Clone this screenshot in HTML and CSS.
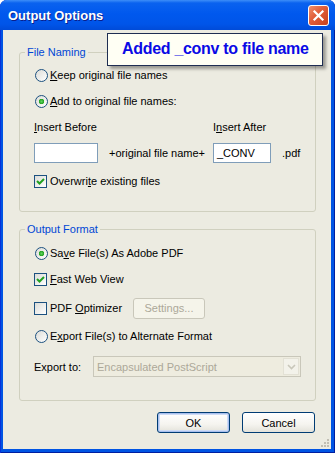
FILE: index.html
```html
<!DOCTYPE html>
<html lang="en">
<head>
  <meta charset="UTF-8">
  <title>Output Options</title>
  <link rel="stylesheet" href="styles.css">
</head>
<body>
  <div class="window">
    <div class="titlebar">
      <span class="title">Output Options</span>
      <span class="close">
        <svg width="19" height="19" viewBox="0 0 19 19"><path d="M5.5 5.5 L13.5 13.5 M13.5 5.5 L5.5 13.5" stroke="#fff" stroke-width="2.2" stroke-linecap="square"/></svg>
      </span>
    </div>
    <div class="client">
      <div class="group naming">
        <span class="legend">File Naming</span>
        <div class="row"><span class="radio"></span><span><u>K</u>eep original file names</span></div>
        <div class="row"><span class="radio on"></span><span><u>A</u>dd to original file names:</span></div>
        <div class="labels">
          <span class="before"><u>I</u>nsert Before</span>
          <span>I<u>n</u>sert After</span>
        </div>
        <div class="fields">
          <span class="field wide"></span>
          <span class="joiner">+original file name+</span>
          <span class="field narrow">_CONV</span>
          <span class="ext">.pdf</span>
        </div>
        <div class="row overwrite"><span class="check"><svg width="11" height="11" viewBox="0 0 11 11"><path d="M2 5 L4.5 7.5 L9 3" fill="none" stroke="#21a121" stroke-width="2"/></svg></span><span>Overwri<u>t</u>e existing files</span></div>
      </div>

      <div class="group format">
        <span class="legend">Output Format</span>
        <div class="row"><span class="radio on"></span><span>Sa<u>v</u>e File(s) As Adobe PDF</span></div>
        <div class="row"><span class="check"><svg width="11" height="11" viewBox="0 0 11 11"><path d="M2 5 L4.5 7.5 L9 3" fill="none" stroke="#21a121" stroke-width="2"/></svg></span><span><u>F</u>ast Web View</span></div>
        <div class="row tall">
          <span class="opt"><span class="check"></span><span>PDF <u>O</u>ptimizer</span></span>
          <span class="btn disabled">Settings...</span>
        </div>
        <div class="row short"><span class="radio"></span><span>E<u>x</u>port File(s) to Alternate Format</span></div>
        <div class="export">
          <span class="export-label">Export to:</span>
          <span class="combo">
            <span class="combo-text">Encapsulated PostScript</span>
            <span class="combo-btn"><svg width="9" height="6" viewBox="0 0 9 6"><path d="M1 1 L4.5 4.5 L8 1" fill="none" stroke="#c9c7ba" stroke-width="1.6"/></svg></span>
          </span>
        </div>
      </div>

      <div class="actions">
        <span class="btn push default">OK</span>
        <span class="btn push">Cancel</span>
      </div>
      <svg class="grip" width="9" height="9" viewBox="0 0 9 9">
        <rect x="6" y="0" width="2" height="2" fill="#c1beb3"/>
        <rect x="3" y="3" width="2" height="2" fill="#c1beb3"/>
        <rect x="6" y="3" width="2" height="2" fill="#c1beb3"/>
        <rect x="0" y="6" width="2" height="2" fill="#c1beb3"/>
        <rect x="3" y="6" width="2" height="2" fill="#c1beb3"/>
        <rect x="6" y="6" width="2" height="2" fill="#c1beb3"/>
      </svg>
    </div>
    <div class="callout">Added _conv to file name</div>
  </div>
</body>
</html>
```

FILE: styles.css
```css
:root {
  --face: #ecebe1;
  --group-line: #d0d0bf;
  --xp-blue: #0054e3;
  --ctl-border: #1c5180;
  --disabled-text: #aca899;
  --disabled-line: #c9c7ba;
}
body {
  margin: 0;
  background: #fff;
  font-family: "Liberation Sans", Arial, sans-serif;
  font-size: 11px;
  color: #000;
}
.window {
  position: relative;
  width: 335px;
  height: 453px;
  display: flex;
  flex-direction: column;
  box-sizing: border-box;
  background: var(--xp-blue);
  border-radius: 7px 7px 0 0;
  box-shadow: inset 1px 0 #0831d9, inset -1px 0 #001ea0, inset 0 -1px #001ea0;
  overflow: hidden;
}
.titlebar {
  height: 30px;
  flex: none;
  display: flex;
  align-items: center;
  justify-content: space-between;
  padding: 0 6px 0 8px;
  background: linear-gradient(180deg, #3d8ef8 0, #0a62ef 3px, #0058ee 14px, #0055e9 24px, #004bd8 30px);
}
.title {
  color: #fff;
  font-weight: bold;
  font-size: 13px;
  text-shadow: 1px 1px #0a1e8c;
}
.close {
  width: 21px;
  height: 21px;
  box-sizing: border-box;
  border: 1px solid #fff;
  border-radius: 3px;
  background: linear-gradient(135deg, #f0906c 0, #e2603c 40%, #c8401c 100%);
  display: flex;
  align-items: center;
  justify-content: center;
}
.client {
  position: relative;
  flex: 1;
  margin: 0 4px 4px 3px;
  padding: 0 15px 0 16px;
  background: var(--face);
  display: flex;
  flex-direction: column;
}
.group {
  position: relative;
  box-sizing: border-box;
  border: 1px solid var(--group-line);
  border-radius: 3px;
  padding-left: 14px;
}
.naming {
  margin-top: 22px;
  height: 160px;
  padding-top: 9px;
}
.format {
  margin-top: 17px;
  height: 172px;
  padding-top: 10px;
}
.legend {
  position: absolute;
  top: -7px;
  left: 5px;
  padding: 0 2px;
  line-height: 13px;
  color: #0046d5;
  background: var(--face);
}
.row {
  display: flex;
  align-items: center;
  height: 26px;
}
.row.tall {
  height: 32px;
}
.row.short {
  height: 24px;
}
.radio {
  flex: none;
  width: 13px;
  height: 13px;
  box-sizing: border-box;
  margin: 0 2px 0 1px;
  border: 1px solid var(--ctl-border);
  border-radius: 50%;
  background: linear-gradient(135deg, #dcdcd7, #fff);
}
.radio.on {
  background: radial-gradient(circle, #5fd35f 0, #21a121 2.5px, transparent 3px), linear-gradient(135deg, #dcdcd7, #fff);
}
.check {
  flex: none;
  width: 13px;
  height: 13px;
  box-sizing: border-box;
  margin-right: 3px;
  border: 1px solid var(--ctl-border);
  background: linear-gradient(135deg, #dcdcd7, #fff);
  display: flex;
}
.labels {
  display: flex;
  align-items: center;
  height: 26px;
}
.before {
  width: 179px;
}
.fields {
  display: flex;
  align-items: center;
  height: 20px;
  margin-top: 3px;
}
.field {
  height: 20px;
  box-sizing: border-box;
  border: 1px solid #7f9db9;
  background: #fff;
  padding: 0 3px;
  line-height: 18px;
}
.field.wide {
  width: 64px;
}
.field.narrow {
  width: 58px;
}
.joiner {
  width: 115px;
  box-sizing: border-box;
  padding-left: 11px;
}
.ext {
  margin-left: 11px;
}
.row.overwrite {
  height: 20px;
  margin-top: 8px;
}
.opt {
  display: flex;
  align-items: center;
  width: 99px;
}
.btn {
  display: flex;
  align-items: center;
  justify-content: center;
  box-sizing: border-box;
  border-radius: 3px;
}
.btn.disabled {
  width: 72px;
  height: 21px;
  border: 1px solid var(--disabled-line);
  background: #f5f4ea;
  color: var(--disabled-text);
}
.export {
  display: flex;
  align-items: center;
  height: 21px;
  margin-top: 8px;
}
.export-label {
  width: 59px;
}
.combo {
  width: 208px;
  height: 21px;
  box-sizing: border-box;
  border: 1px solid var(--disabled-line);
  background: #eeecdf;
  display: flex;
  align-items: center;
  justify-content: space-between;
  padding: 1px;
}
.combo-text {
  padding-left: 2px;
  color: var(--disabled-text);
}
.combo-btn {
  width: 16px;
  height: 17px;
  box-sizing: border-box;
  border: 1px solid #e3e1d5;
  background: #f3f2ea;
  display: flex;
  align-items: center;
  justify-content: center;
}
.actions {
  display: flex;
  justify-content: flex-end;
  gap: 12px;
  margin-top: 11px;
  padding-right: 1px;
}
.btn.push {
  width: 73px;
  height: 21px;
  border: 1px solid #003c74;
  background: linear-gradient(180deg, #fff 0, #f5f4ef 60%, #e3e2da 100%);
}
.btn.default {
  box-shadow: inset 0 0 0 1px #a9c0ee, inset 0 0 0 2px #cedbf5;
}
.grip {
  position: absolute;
  right: 1px;
  bottom: 1px;
}
.callout {
  position: absolute;
  left: 107px;
  top: 33px;
  width: 216px;
  height: 33px;
  box-sizing: border-box;
  border: 1px solid #1e2d52;
  background: #fffff4;
  box-shadow: 3px 3px 3px rgba(0, 0, 0, 0.35);
  padding-left: 14px;
  line-height: 29px;
  font-size: 16px;
  font-weight: bold;
  letter-spacing: -0.3px;
  color: #0a0ae6;
}
```
